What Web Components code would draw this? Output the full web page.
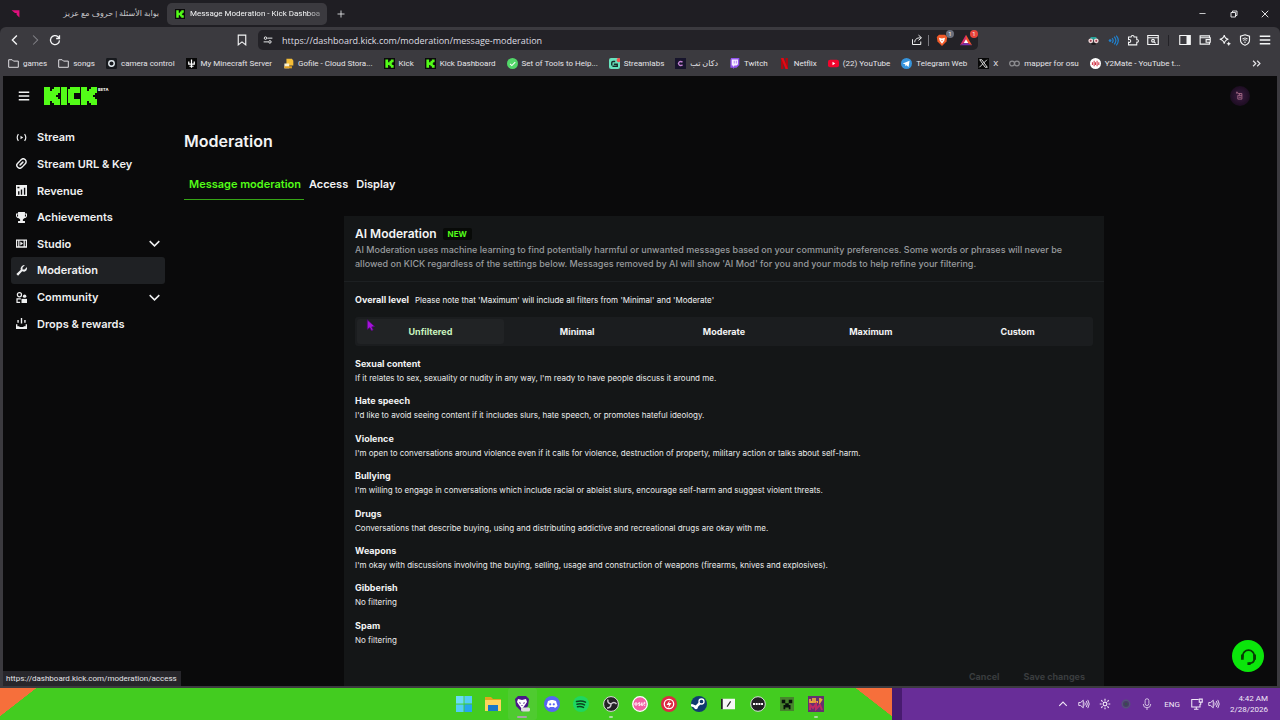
<!DOCTYPE html>
<html lang="en">
<head>
<meta charset="utf-8">
<title>Message Moderation - Kick Dashboard</title>
<style>
html,body{margin:0;height:100%}
body{display:flex;flex-direction:column;overflow:hidden;background:#1f1e23;color:#f4f5f6;
--chrome:#3b3a3f;--dark:#1f1e23;--green:#53fc18;font-family:Roboto,"Noto Sans","DejaVu Sans",sans-serif;font-size:8px}
</style>
</head>
<body>
<tab-strip></tab-strip>
<tool-bar></tool-bar>
<bookmark-bar></bookmark-bar>
<kick-dashboard></kick-dashboard>
<task-bar></task-bar>
<script>
const K='<path fill="#0a0a0a" d="M0 0h16v16H0z"/><path fill="#53fc18" d="M2 2h4v4h2V4h2V2h4v4h-2v2h-1v1h1v1h2v4h-4v-2H8v-2H6v4H2z"/>';
const S='fill="none" stroke="currentColor" ';
const ICONS={
 kick:K,
 arrow:'<path fill="#e0107c" d="M1 2h14v13l-5-5V7H7z"/>',
 plus:`<path ${S}stroke-width="1.6" d="M8 1v14M1 8h14"/>`,
 min:`<path ${S}stroke-width="1.8" d="M1 8h14"/>`,
 restore:`<path ${S}stroke-width="1.8" d="M2 5h9v9H2zM5 5V2h9v9h-3"/>`,
 close:`<path ${S}stroke-width="1.8" d="M1.500 1.500l13 13M14.500 1.500l-13 13"/>`,
 back:`<path ${S}stroke-width="1.800" d="M10.500 2l-6 6 6 6"/>`,
 forward:`<path ${S}stroke-width="1.400" d="M5.500 2l6 6-6 6"/>`,
 reload:`<path ${S}stroke-width="1.700" d="M14 8.500A6 6 0 1 1 12 3.600L14 6M14 1.500V6H9.500"/>`,
 mark:`<path ${S}stroke-width="1.500" d="M3 1.500h10v13l-5-4-5 4z"/>`,
 tune:`<g ${S}stroke-width="1.500"><circle cx="4" cy="5" r="2"/><path d="M7 5h8M1 11h7"/><circle cx="11" cy="11" r="2"/></g>`,
 share:`<path ${S}stroke-width="1.300" d="M2 7v7h11v-4M5 11c0-4 3-6 8-6M10 1.500L14 5l-4 3.500"/>`,
 brave:'<path fill="#f15a29" d="M4 1h8l3 3-1 6-6 6-6-6-1-6z"/><path fill="#fff" d="M4 5l4 1 4-1-1 4-3 4-3-4z"/><path fill="#f15a29" d="M7 8h2l-1 2z"/>',
 bat:'<path fill="#d62e6a" d="M8 1L0 15l8-4z"/><path fill="#7b2eaa" d="M0 15h16l-8-4z"/><path fill="#f5532d" d="M8 1l8 14-8-4z"/><path fill="#fff" d="M8 7l3 5H5z"/>',
 spy:'<path fill="#26a39a" d="M4 3h8l1 4H3z"/><circle cx="4" cy="8.500" r="3.500" fill="#f0dada"/><circle cx="12" cy="8.500" r="3.500" fill="#f0dada"/><circle cx="4" cy="8.500" r="1.500" fill="#a04050"/><circle cx="12" cy="8.500" r="1.500" fill="#a04050"/><path fill="#111" d="M5 12h6v2H5z"/>',
 wave:'<g fill="none" stroke="#1f83d2" stroke-width="1.700"><path d="M6 4.500q3 3.500 0 7M9 2.500q5 5.500 0 11M12 1q6 7 0 14"/></g><circle cx="3" cy="8" r="2" fill="#1f83d2"/>',
 puzzle:`<path ${S}stroke-width="1.400" d="M2 4h3.500a2 2 0 1 1 4 0H13v3.500a1.800 1.800 0 1 1 0 3.500v3.500H2V11a2 2 0 1 0 0-3.500z"/>`,
 search:`<g ${S}stroke-width="1.500"><path d="M1 2h14v12H1zM1 5h14"/><circle cx="8" cy="9" r="1.800"/><path d="M9.500 10.500l2 2"/></g>`,
 panel:`<path ${S}stroke-width="1.500" d="M1 2h14v12H1z"/><path fill="currentColor" d="M10 2h5v12h-5z"/>`,
 wallet:`<path ${S}stroke-width="1.500" d="M14 5V2.500H1.500v11H14V11M1.500 5H15v6H9.500V7.500H15"/>`,
 star:`<path ${S}stroke-width="1.400" d="M7 1.500q1 5 5.500 5.500Q8 8 7 13 6 8 1 7q5-.500 6-5.500z"/><path fill="currentColor" d="M13 10l1 2 2 1-2 1-1 2-1-2-2-1 2-1z"/>`,
 vpn:`<path ${S}stroke-width="1.500" d="M8 1l6 2v5q0 5-6 7-6-2-6-7V3z"/><path ${S}stroke-width="1.200" d="M4.500 6.500q3.500-2.500 7 0M5.500 8.500q2.500-2 5 0"/><circle cx="8" cy="11" r="1" fill="currentColor"/>`,
 menu:`<path ${S}stroke-width="1.800" d="M1 3h14M1 8h14M1 13h14"/>`,
 folder:`<path ${S}stroke-width="1.400" d="M1 2.500h5l2 2h7v9H1z"/>`,
 camera:'<rect width="16" height="16" rx="2" fill="#17191d"/><circle cx="8" cy="8" r="4" fill="none" stroke="#e4ebf0" stroke-width="2"/>',
 mine:'<path fill="#080808" d="M0 0h16v16H0z"/><path fill="none" stroke="#fff" stroke-width="1.800" d="M8 2v12M4 5v4h8V5M5 12h6"/>',
 gofile:'<path fill="#f3bd37" d="M5 1h8l2 3v7H5z"/><path fill="#faf0d0" d="M2 8h7v7H2z"/><path fill="#e2a01f" d="M2 12h11v3H2z"/>',
 check:'<circle cx="8" cy="8" r="8" fill="#52d769"/><path fill="none" stroke="#fff" stroke-width="1.500" d="M4.500 8.500l2.500 2.500 5-5"/>',
 stream:'<rect width="16" height="16" rx="3" fill="#68e3bd"/><path fill="none" stroke="#152e2a" stroke-width="2" d="M4 11V7q0-2 2-2h3M7 9h5v3H5"/><circle cx="14" cy="3" r="3" fill="#ef5350"/>',
 cshop:'<path fill="#17142c" d="M0 0h16v16H0z"/><path fill="none" stroke="#c884d8" stroke-width="2" d="M11 6q-3-2-5 0t0 4q2 2 5 0"/>',
 twitch:'<path fill="#9253ee" d="M3 0h12v10l-4 4H8l-2 2v-2H2V3z"/><path fill="#f7eeff" d="M4 2h9v7l-2 2H8l-2 2v-2H4z"/><path fill="#9253ee" d="M7 4h1v4H7zM10 4h1v4h-1z"/>',
 netflix:'<path fill="#b20710" d="M3 0h3.500v16H3zM9.500 0H13v16H9.500z"/><path fill="#e50914" d="M3 0h3.500L13 16H9.500z"/>',
 youtube:'<rect y="2.500" width="16" height="11" rx="3" fill="#f2042d"/><path fill="#fff" d="M6.500 5.500v5l4-2.500z"/>',
 telegram:'<circle cx="8" cy="8" r="8" fill="#3794dc"/><path fill="#fff" d="M2.500 8l10-4-1.500 9-3-2.500-1.500 1.500-.500-3z"/>',
 x:'<path fill="#080808" d="M0 0h16v16H0z"/><path fill="none" stroke="#fff" stroke-width="1.200" d="M2.500 2.500h3l8 11h-3zM13 2.500l-5 5M7 8.500l-5 5"/>',
 osu:'<g fill="none" stroke="#8d8d91" stroke-width="1.800"><circle cx="4.500" cy="8" r="3.500"/><circle cx="11.500" cy="8" r="3.500"/></g>',
 y2:'<circle cx="8" cy="8" r="8" fill="#fff"/><path stroke="#d33346" stroke-width="1.500" d="M3.500 6v4M6 4v8M8 6v4M10.300 4v8M12.800 6v4"/>',
 more:`<path ${S}stroke-width="1.700" d="M3 4l4 4-4 4M9 4l4 4-4 4"/>`,
 live:`<path ${S}stroke-width="1.700" d="M3.500 3Q0 8 3.500 13M12.500 3q3.500 5 0 10"/><path fill="currentColor" d="M6.500 5.500v5l4-2.500z"/>`,
 link:`<g ${S}stroke-width="2.100" stroke-linecap="round"><path d="M6 4l1.500-1.500a4 4 0 0 1 6 6L11 11M10 12l-1.500 1.500a4 4 0 0 1-6-6L5 5M6 10l4-4"/></g>`,
 revenue:'<path fill="currentColor" fill-rule="evenodd" d="M0 0h16v16H0zM3 9v5h2V9zM7 6.500V14h2V6.500zM11.500 4v10h2V4zM2 2.500v2.200h3V2.500z"/>',
 trophy:'<path fill="currentColor" fill-rule="evenodd" d="M3 0h10v2h3v4q-1 3-4 3l-2 2v2h3v3H3v-3h3v-2L4 9Q1 9 0 6V2h3zM1.500 3.500V6L3 7V3.500zM13 3.500V7l1.500-1V3.500z"/>',
 studio:'<path fill="currentColor" fill-rule="evenodd" d="M0 2h16v12H0zM1.700 4v8h1.500V4zM12.800 4v8h1.500V4zM5 4v8h6V4z"/><path fill="currentColor" d="M6.300 5l4 3-4 3z"/>',
 wrench:'<path fill="currentColor" d="M13 0L9.500 3.500V6.500h3L16 3q.500 5-3 6.500-2 .500-4-.500L3 15.500 0.500 13 7 7Q6 4.500 8 2q2-2 5-2z"/>',
 people:`<circle cx="5" cy="4" r="3" ${S}stroke-width="1.800"/><path ${S}stroke-width="1.800" d="M7 10H1.500v5H6"/><circle cx="12.500" cy="6" r="2.500" fill="currentColor"/><path fill="currentColor" d="M8 10h8v6H8z"/>`,
 drops:'<path fill="currentColor" d="M7 0h2v8H7zM2 3h2v4H2zM12 3h2v4h-2zM0 9h2v3h3v1h6v-1h3V9h2v7H0z"/>',
 chevron:`<path ${S}stroke-width="2.200" d="M1 4.500l7 7 7-7"/>`,
 headset:'<g fill="none" stroke="#073b04" stroke-width="1.700"><path d="M2.500 9V7.500a5.500 5.500 0 0 1 11 0V10q0 4-5 4.500"/></g><path fill="#073b04" d="M1 6h2.500v5H1zM12.500 6H15v5h-2.500zM7 13.300h3V16H7z"/>',
 win:'<path fill="#6bdcf7" d="M0 0h7.600v7.600H0z"/><path fill="#53cdf6" d="M8.400 0H16v7.600H8.400zM0 8.400h7.600V16H0z"/><path fill="#25a6ee" d="M8.400 8.400H16V16H8.400z"/>',
 explorer:'<path fill="#e2a51e" d="M0 1h6l2 2h8v4H0z"/><path fill="#fed45d" d="M0 4h16v11H0z"/><path fill="#1878c8" d="M3 9h10v6H3z"/>',
 bravebeta:'<path fill="#4b1788" d="M4 0h8l3 3-1 7-6 6-6-6-1-7z"/><path fill="#fff" d="M4 3l4 1 4-1 1 3-2 3-3 4-3-4-2-3z"/><path fill="#4b1788" d="M5 6l2 1-1 1zM11 6L9 7l1 1zM7 9h2l-1 1z"/><rect x="7" y="11.500" width="9" height="4" rx="1.500" fill="#ddd"/>',
 discord:'<circle cx="8" cy="8" r="8" fill="#5865f2"/><path fill="#fff" d="M4 5l3-1h2l3 1 1.500 5-2.500 2-1-1H6l-1 1-2.500-2z"/><circle cx="6.200" cy="8.300" r="1.100" fill="#5865f2"/><circle cx="9.800" cy="8.300" r="1.100" fill="#5865f2"/>',
 spotify:'<circle cx="8" cy="8" r="8" fill="#1ed760"/><path fill="none" stroke="#0b4420" stroke-width="1.500" stroke-linecap="round" d="M3.500 5.500q5-1.500 9 .700M4 8.200q4-1.200 7.500.700M4.500 10.800q3-1 6 .600"/>',
 obs:'<circle cx="8" cy="8" r="7.400" fill="#242226" stroke="#ddd"/><path fill="none" stroke="#cfcbd0" stroke-width="1.500" d="M8 8Q4 7 5 3.500M8 8q3-3 5.500 0M8 8q0 4-4 4"/>',
 osugame:'<circle cx="8" cy="8" r="7.300" fill="#f160a3" stroke="#fff" stroke-width="1.300"/><g fill="none" stroke="#fff"><circle cx="4" cy="8" r="1.200"/><path d="M8 6.800H6.700V8H8v1.300H6.500M9.300 6.500v2.700h1.700V6.500M12.700 5.800v2.500M12.700 9v.800"/></g>',
 bolt:'<circle cx="8" cy="8" r="8" fill="#dc2b43"/><circle cx="8" cy="8" r="4.700" fill="none" stroke="#fff" stroke-width="1.300"/><path fill="#fff" d="M9 4L5.500 9H8l-1 3.500L10.500 7H8z"/>',
 steam:'<circle cx="8" cy="8" r="8" fill="#103b70"/><path fill="none" stroke="#fff" stroke-width="2.500" d="M0 9l5 2 5-5"/><circle cx="10.500" cy="5.500" r="2.500" fill="#103b70" stroke="#fff" stroke-width="1.300"/><circle cx="5" cy="11.500" r="1.800" fill="#fff"/>',
 slash:'<path fill="#f6f6f6" d="M0 2h16v12H0z"/><path fill="#222" d="M0 2h2v12H0z"/><path stroke="#222" stroke-width="1.300" d="M7 11l4-6"/>',
 round:'<circle cx="8" cy="8" r="7.300" fill="#202123" stroke="#d7dfda"/><path stroke="#fff" stroke-width="2" stroke-dasharray="2 .700" d="M3 8h10"/>',
 creeper:'<path fill="#47852d" d="M0 0h16v16H0z"/><path fill="#07130a" d="M2 3h4v4H2zM10 3h4v4h-4zM6 7h4v2h2v5h-2v-2H6v2H4V9h2z"/>',
 game:'<path fill="#65306f" d="M0 0h16v16H0z"/><path fill="none" stroke="#e7a83d" stroke-width="1.800" d="M2 3v3h3V2M7 2v4h3M12 2v4l2-3"/><path fill="none" stroke="#bb2b65" stroke-width="2" d="M2 14V9l3 3 3-4v5l4-4 2 5"/>',
 up:`<path ${S}stroke-width="1.800" d="M2 11l6-6 6 6"/>`,
 sound:`<path ${S}stroke-width="1.200" d="M1 6h2.500L7 3v10L3.500 10H1zM9 6q1.500 2 0 4M11 4q3 4 0 8M13 2.500q4 5.500 0 11"/>`,
 sun:`<circle cx="8" cy="8" r="2.500" ${S}stroke-width="1.500"/><path ${S}stroke-width="1.500" d="M8 1v2.500M8 12.500V15M1 8h2.500M12.500 8H15M3 3l1.800 1.800M11.200 11.200L13 13M13 3l-1.800 1.800M4.800 11.200L3 13"/>`,
 cam:'<circle cx="8" cy="8" r="5" fill="#493b68" stroke="#55507a" stroke-width="2"/><circle cx="8" cy="8" r="2" fill="#394c50"/>',
 mic:`<g opacity=".8"><rect x="5.500" y="1" width="5" height="9" rx="2.500" ${S}stroke-width="1.300"/><path ${S}stroke-width="1.300" d="M3 8q0 5 5 5t5-5M8 13v3"/></g>`,
 net:`<path ${S}stroke-width="1.400" d="M10 2H1v10h11V8M4 15h6M7 12v3M11 1.500h4v4h-4zM13 5.500V9"/>`,
 avatar:'<path fill="none" stroke="#b0728e" stroke-width="1.300" d="M3 1v3M2 3h3M5 4h6v9H4.500V7H11M6 10h4M7 4v3"/>',
 cursor:'<path fill="#a712dc" stroke="#4a0c69" d="M3 1l10 9-4 .500 2 4-2.500 1-2-4L3 14z"/>'
};
const define=(name,css,html)=>customElements.define(name,class extends HTMLElement{
 constructor(){super();this.attachShadow({mode:'open'})}
 connectedCallback(){this.shadowRoot.innerHTML='<style>:host,*{box-sizing:border-box}a{color:inherit;text-decoration:none}button{font:inherit;color:inherit;background:none;border:0;padding:0;margin:0}'+css+'</style>'+(typeof html==='function'?html(this):html)}
});
const icon=(n,s=12,extra='')=>`<ui-icon name="${n}" style="--s:${s}px" ${extra}></ui-icon>`;
const btn=(n,label,s=12,cls='')=>`<button class="${cls}" aria-label="${label}">${icon(n,s)}</button>`;

define('ui-icon',':host{display:block;flex:none;width:var(--s);height:var(--s)}svg{display:block;width:100%;height:100%}',
 e=>`<svg viewBox="0 0 16 16" aria-hidden="true">${ICONS[e.getAttribute('name')]}</svg>`);

define('tab-strip',`:host{display:flex;flex:none;height:27px;align-items:center;background:var(--dark)}
 .tab{display:flex;align-items:center;height:22px;width:160px;padding:0 8px;gap:5px;border-radius:5px;white-space:nowrap}
 .first{margin-left:3px;width:164px;justify-content:space-between;color:#c9c8cc}
 .active{background:var(--chrome);font-size:8px}
 .active span{-webkit-mask:linear-gradient(90deg,#000 90%,#0006)}
 button{display:grid;place-items:center;width:28px;height:22px}
 .ctl{margin-left:auto;display:flex}.ctl button{width:31px}`,
 `<a class="tab first" href="#">${icon('arrow',9)}<span dir="rtl">بوابة الأسئلة | حروف مع عزيز</span></a>
 <a class="tab active" href="#">${icon('kick',10)}<span>Message Moderation - Kick Dashboa</span></a>
 ${btn('plus','New tab',8)}<div class="ctl">${btn('min','Minimize',7)}${btn('restore','Restore',8)}${btn('close','Close',8)}</div>`);

define('tool-bar',`:host{display:flex;flex:none;height:26px;align-items:center;background:var(--chrome);padding:0 5px;border-radius:6px 6px 0 0}
 button{display:grid;place-items:center;width:20px;height:20px;flex:none}
 .dim{color:#85848a}.mark{margin-left:167px}
 .url{flex:1;display:flex;align-items:center;height:20px;margin-left:6px;margin-right:105px;background:#232227;border-radius:5px}
 input{flex:1;min-width:0;font:9px "Open Sans","Noto Sans",sans-serif;color:#dfdee2;background:none;border:0;outline:0;padding:0 0 0 4px}
 i{flex:none;width:1px;height:11px;background:#77767c;margin:0 1px}
 .url button{width:24px}.url button.sm{width:20px}
 .sep{margin:0 6px 0 5px;background:#232227}
 .badge{position:relative}.badge b{position:absolute;right:0;top:0;width:8px;height:8px;border-radius:4px;background:#6b6f7c;font-size:6px;line-height:8px;font-weight:400}.badge.red b{background:#e8443b}`,
 `${btn('back','Back',12)}${btn('forward','Forward',12,'dim')}${btn('reload','Reload',12)}${btn('mark','Bookmark',12,'mark')}
 <div class="url">${btn('tune','Site settings',10,'sm')}<input aria-label="Address" value="https://dashboard.kick.com/moderation/message-moderation">
 ${btn('share','Share',12,'sm')}<i></i><button class="badge" aria-label="Shields">${icon('brave',12)}<b>1</b></button><button class="badge red" aria-label="Rewards">${icon('bat',12)}<b>1</b></button></div>
 ${btn('spy','Extension',11)}${btn('wave','Audio extension',11)}${btn('puzzle','Extensions',12)}${btn('search','Search tabs',12)}<i class="sep"></i>${btn('panel','Sidebar',12)}${btn('wallet','Wallet',12)}${btn('star','Assistant',12)}${btn('vpn','VPN',12)}${btn('menu','Menu',12)}`);

define('bookmark-link',':host{display:block;flex:none}a{display:flex;align-items:center;gap:4px;white-space:nowrap}',
 e=>`<a href="#">${icon(e.getAttribute('icon'),11)}<slot></slot></a>`);
const marks=[['folder','games'],['folder','songs'],['camera','camera control'],['mine','My Minecraft Server'],['gofile','Gofile - Cloud Stora...'],['kick','Kick'],['kick','Kick Dashboard'],['check','Set of Tools to Help...'],['stream','Streamlabs'],['cshop','دكان تب'],['twitch','Twitch'],['netflix','Netflix'],['youtube','(22) YouTube'],['telegram','Telegram Web'],['x','X'],['osu','mapper for osu'],['y2','Y2Mate - YouTube t...']];
define('bookmark-bar',`:host{display:flex;flex:none;height:23px;align-items:center;gap:11px;padding:0 18px 2px 8px;background:var(--chrome);color:#e6e5e9}button{margin-left:auto}`,
 marks.map(m=>`<bookmark-link icon="${m[0]}">${m[1]}</bookmark-link>`).join('')+btn('more','More bookmarks',11));

define('nav-item',`:host{display:grid}a{display:flex;align-items:center;gap:10px;padding:0 5px;border-radius:3px;font-weight:600;font-size:11px;color:#eff0f1}
 :host([active]) a{background:#1f2124}.chev{margin-left:auto}`,
 e=>`<a href="#">${icon(e.getAttribute('icon'),11)}<slot></slot>${e.hasAttribute('expand')?icon('chevron',11,'class="chev"'):''}</a>`);

define('level-picker',`:host{display:block}fieldset{display:grid;grid-template-columns:repeat(5,1fr);margin:0;border:0;padding:2px;min-width:0;background:#1b1d1f;border-radius:3px}
 label{display:grid;place-items:center;height:25px;border-radius:3px;font-size:9px;font-weight:700}
 input{position:absolute;opacity:0;margin:0}label:has(:checked){background:#212325;color:#c9f3bf}`,
 '<fieldset aria-label="Overall level">'+['Unfiltered','Minimal','Moderate','Maximum','Custom'].map((l,i)=>`<label><input type="radio" name="level" ${i?'':'checked'}>${l}</label>`).join('')+'</fieldset>');

define('filter-item',':host{display:block;line-height:14px}h3{margin:0;font-size:9px;font-weight:700;line-height:14px}p{margin:0;font-size:8px;line-height:15px;color:#ebecec}',
 e=>`<h3>${e.getAttribute('heading')}</h3><p><slot></slot></p>`);
const filters=[['Sexual content',"If it relates to sex, sexuality or nudity in any way, I'm ready to have people discuss it around me."],['Hate speech',"I'd like to avoid seeing content if it includes slurs, hate speech, or promotes hateful ideology."],['Violence',"I'm open to conversations around violence even if it calls for violence, destruction of property, military action or talks about self-harm."],['Bullying',"I'm willing to engage in conversations which include racial or ableist slurs, encourage self-harm and suggest violent threats."],['Drugs','Conversations that describe buying, using and distributing addictive and recreational drugs are okay with me.'],['Weapons',"I'm okay with discussions involving the buying, selling, usage and construction of weapons (firearms, knives and explosives)."],['Gibberish','No filtering'],['Spam','No filtering']];
define('moderation-card',`:host{display:block;width:100%;max-width:760px;margin:16px auto 0;background:#141617;min-height:500px}
 header{padding:10px 16px 10px 11px;border-bottom:1px solid #1d2022}.t{display:flex;align-items:center;gap:6px;margin-bottom:1px}
 h2{margin:0;font-size:12px;line-height:16px;font-weight:600}.new{background:#080a08;color:var(--green);font-size:8px;font-weight:700;line-height:12px;padding:0 5px;border-radius:2px}
 header p{margin:0;font-size:9px;font-weight:500;line-height:14px;color:#989b9e}
 .b{padding:11px}.o{display:flex;align-items:center;gap:6px;font-size:8px;line-height:14px;margin-bottom:10px}.o b{font-size:9px;font-weight:700}
 .list{display:grid;grid-template-rows:repeat(8,1fr);height:299px;margin:11px 0 14px}
 footer{display:flex;justify-content:flex-end;gap:24px;padding:0 8px;font-size:9px;font-weight:700;color:#3a3d3f;line-height:14px}`,
 `<header><div class="t"><h2>AI Moderation</h2><span class="new">NEW</span></div><p>AI Moderation uses machine learning to find potentially harmful or unwanted messages based on your community preferences. Some words or phrases will never be allowed on KICK regardless of the settings below. Messages removed by AI will show 'AI Mod' for you and your mods to help refine your filtering.</p></header>
 <div class="b"><div class="o"><b>Overall level</b><span>Please note that 'Maximum' will include all filters from 'Minimal' and 'Moderate'</span></div><level-picker></level-picker>
 <div class="list">${filters.map(f=>`<filter-item heading="${f[0]}">${f[1]}</filter-item>`).join('')}</div>
 <footer><button disabled>Cancel</button><button disabled>Save changes</button></footer></div>`);

define('kick-logo',':host{display:flex;gap:1px;align-items:flex-start}svg{display:block;width:53px;height:18px}span{font-size:4px;font-weight:800;line-height:5px}',
 `<svg viewBox="0 0 53 18" role="img" aria-label="Kick"><path fill="#53fc18" d="M0 0h6v4h2V2h2V0h6v6h-2v2h-2v2h2v2h2v6h-6v-2H8v-2H6v4H0zM17 0h6v18h-6zM26 0h10v6h-6v6h6v6H26v-2h-2V2h2zM37 0h6v4h2V2h2V0h6v6h-2v2h-2v2h2v2h2v6h-6v-2h-2v-2h-2v4h-6z"/></svg><span>BETA</span>`);

define('kick-dashboard',`:host{flex:1;min-height:0;display:flex;flex-direction:column;position:relative;overflow:hidden;background:#0a0a0b;border:solid #3b3a3f;border-width:0 3px 2px;font-family:Inter,sans-serif;color:#f2f3f4}
 .top{flex:none;display:flex;align-items:center;gap:14px;height:40px;padding:0 27px 0 15px}
 .av{margin-left:auto;width:20px;height:20px;border-radius:10px;background:radial-gradient(#3a1b40,#1d0d22 70%);display:grid;place-items:center}
 .row{flex:1;min-height:0;display:flex}
 nav{flex:none;width:154px;margin:8px 16px 0 8px;display:grid;grid-template-rows:repeat(8,1fr);height:213px}
 main{flex:1;min-width:0;padding:15px 13px 0 3px}
 h1{margin:0;font-size:16px;line-height:20px;font-weight:600}
 .tabs{display:flex;margin-top:17px}.tabs a{padding:8px 3px 7px 5px;font-size:11px;line-height:16px;font-weight:600;border-bottom:1px solid transparent}.tabs a.on{color:var(--green);border-color:#36a516}
 .help{position:absolute;right:13px;bottom:14px;width:32px;height:32px;border-radius:16px;background:#0be60b;display:grid;place-items:center}
 .status{position:absolute;left:-3px;bottom:0;background:#27262b;color:#e5e4e8;font:8px/15px Roboto,"Noto Sans",sans-serif;padding:0 4px 0 6px}
 .cur{position:absolute;left:362px;top:243px}`,
 `<div class="top">${btn('menu','Toggle menu',12)}<kick-logo></kick-logo>${btn('avatar','Account',10,'av')}</div>
 <div class="row"><nav><nav-item icon="live">Stream</nav-item><nav-item icon="link">Stream URL &amp; Key</nav-item><nav-item icon="revenue">Revenue</nav-item><nav-item icon="trophy">Achievements</nav-item><nav-item icon="studio" expand>Studio</nav-item><nav-item icon="wrench" active>Moderation</nav-item><nav-item icon="people" expand>Community</nav-item><nav-item icon="drops">Drops &amp; rewards</nav-item></nav>
 <main><h1>Moderation</h1><div class="tabs"><a class="on" href="#">Message moderation</a><a href="#">Access</a><a href="#">Display</a></div><moderation-card></moderation-card></main></div>
 ${btn('headset','Support',17,'help')}<div class="status">https://dashboard.kick.com/moderation/access</div>${icon('cursor',12,'class="cur"')}`);

define('task-bar',`:host{flex:none;height:32px;display:grid;grid-template-columns:1fr 382px 1fr;align-items:center;
 background:linear-gradient(to bottom right,#f66f3b 50%,transparent 51%) 0 0/36px 28px no-repeat,linear-gradient(to bottom left,#f66f3b 50%,transparent 51%) 856px 0/36px 28px no-repeat,linear-gradient(90deg,#43cc20 892px,#481b70 892px 902px,#682d98 902px)}
 .apps{grid-column:2;display:grid;grid-template-columns:repeat(13,1fr);height:32px}.apps button{display:grid;place-items:center;position:relative}
 .sel{background:#4fcb30!important;border-radius:3px}.run::after,.sel::after{content:"";position:absolute;bottom:2px;left:50%;translate:-50%;width:4px;height:2px;border-radius:1px;background:#a9dc9f}.sel::after{width:10px;background:#a9a3a9}
 .tray{display:flex;justify-content:flex-end;align-items:center;padding-right:12px;color:#f1e8f7}.tray button{display:grid;place-items:center;width:21px;height:24px}
 .tray button.pair{width:17px}.lang{margin:0 8px 0 7px}.time{text-align:right;line-height:11px;margin-left:6px;width:40px;white-space:nowrap;display:flex;flex-direction:column;align-items:flex-end}`,
 `<div class="apps">${['win','explorer','bravebeta','discord','spotify','obs','osugame','bolt','steam','slash','round','creeper','game'].map(n=>btn(n,n,n==='slash'||n==='creeper'?14:16,n==='bravebeta'?'sel':n==='obs'||n==='game'?'run':'')).join('')}</div>
 <div class="tray">${btn('up','Hidden icons',10)}${btn('sound','Volume mixer',12)}${btn('sun','Brightness',12)}${btn('cam','Camera',12)}${btn('mic','Microphone',12)}<span class="lang">ENG</span>${btn('net','Network',12,'pair')}${btn('sound','Volume',12,'pair')}<div class="time"><span>4:42 AM</span><span>2/28/2026</span></div></div>`);
</script>
</body>
</html>
